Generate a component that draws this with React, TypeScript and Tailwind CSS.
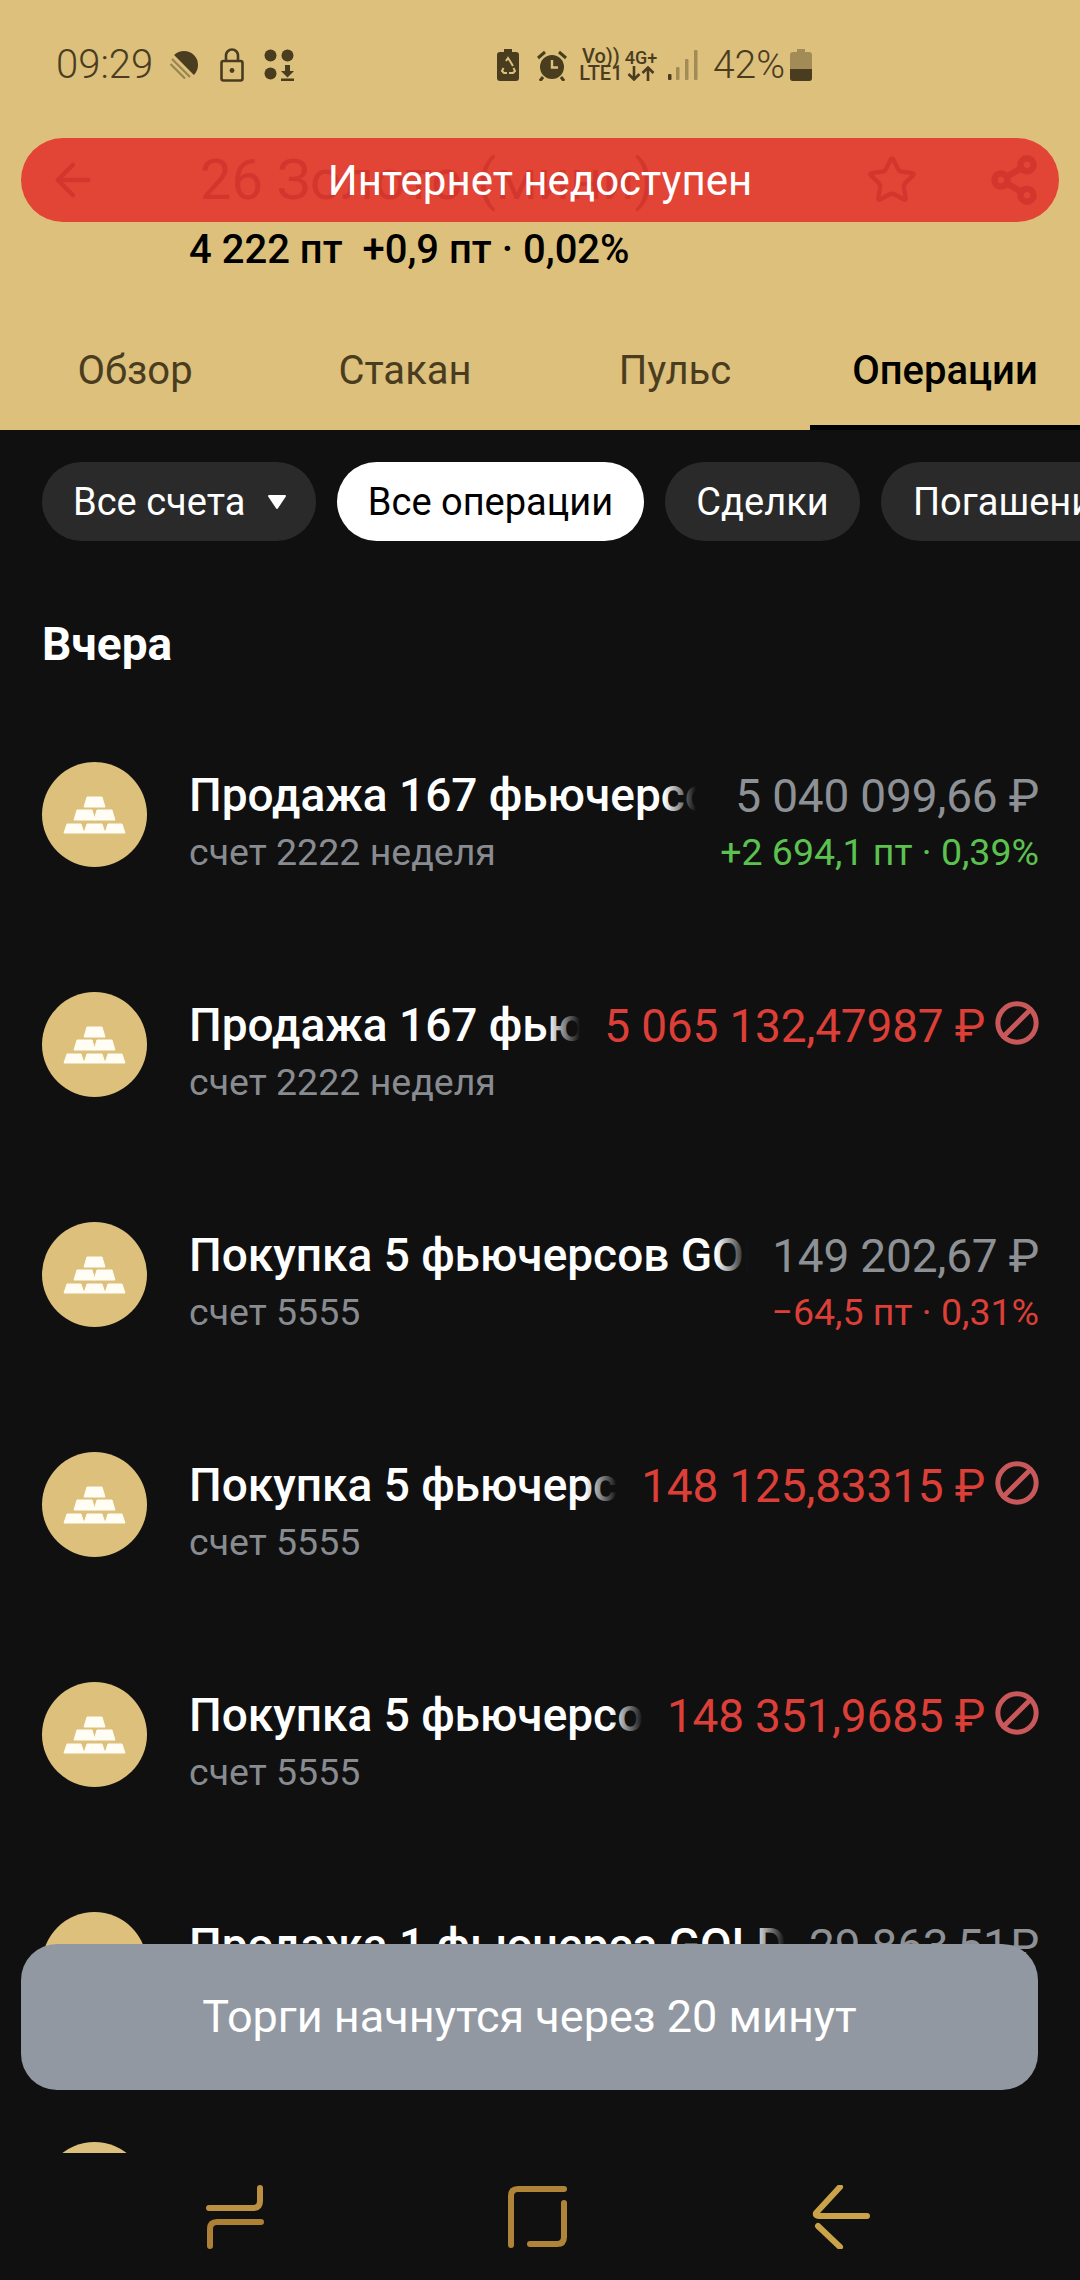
import { ArrowLeft, Ban, Share2, Star } from 'lucide-react'

const rows = [
  { title: 'Продажа 167 фьючерсов GOLD', sub: 'счет 2222 неделя', amount: '5 040 099,66 ₽', result: '+2 694,1 пт · 0,39%', tone: 'up' },
  { title: 'Продажа 167 фьючерсов GOLD', sub: 'счет 2222 неделя', amount: '5 065 132,47987 ₽', tone: 'failed' },
  { title: 'Покупка 5 фьючерсов GOLD', sub: 'счет 5555', amount: '149 202,67 ₽', result: '−64,5 пт · 0,31%', tone: 'down' },
  { title: 'Покупка 5 фьючерсов GOLD', sub: 'счет 5555', amount: '148 125,83315 ₽', tone: 'failed' },
  { title: 'Покупка 5 фьючерсов GOLD', sub: 'счет 5555', amount: '148 351,9685 ₽', tone: 'failed' },
  { title: 'Продажа 1 фьючерса GOLD', sub: 'счет 5555', amount: '29 863,51₽', tone: 'up' },
]

function GoldBars() {
  return (
    <svg width="63" height="38" viewBox="0 0 63 38" fill="#fffdf4" stroke="#fffdf4" strokeWidth="1" strokeLinejoin="round">
      <path d="M24 1h15l3 10H21z" />
      <path d="M14 14h15l3 10H11z" />
      <path d="M34 14h15l3 10H31z" />
      <path d="M4 28h14l3 9H1z" />
      <path d="M24 28h15l3 9H21z" />
      <path d="M45 28h14l3 9H42z" />
    </svg>
  )
}

function StatusLeftIcons() {
  return (
    <div className="ml-[17px] flex items-center text-[#4a3d1f]">
      <svg width="28" height="28" viewBox="0 0 28 28">
        <path d="M4.100 4.100A14 14 0 0 1 23.900 23.900z" fill="currentColor" />
        <path d="M2 8l18 18M0.500 13l14.500 14.500" stroke="currentColor" strokeWidth="2.200" opacity="0.45" />
      </svg>
      <svg className="ml-[22px]" width="24" height="34" viewBox="0 0 24 34" fill="none" stroke="currentColor" strokeWidth="2.600">
        <rect x="1.500" y="13" width="21" height="19.500" rx="2" />
        <path d="M6 13V7.500a6 6 0 0 1 12 0V13" />
        <circle cx="12" cy="22.500" r="2.400" fill="currentColor" stroke="none" />
      </svg>
      <svg className="ml-[20px]" width="30" height="32" viewBox="0 0 30 32" fill="currentColor">
        <circle cx="6.500" cy="6.500" r="6" />
        <circle cx="23.500" cy="6.500" r="6" />
        <circle cx="6.500" cy="24.500" r="6" />
        <path d="M21 16h5v6h4l-6.500 6.500L17 22h4zM17 29.500h13V32H17z" />
      </svg>
    </div>
  )
}

function StatusRightIcons() {
  return (
    <div className="flex items-center text-[#4a3d1f]">
      <svg width="22" height="32" viewBox="0 0 22 32">
        <path d="M7 0h8v3h4a3 3 0 0 1 3 3v23a3 3 0 0 1-3 3H3a3 3 0 0 1-3-3V6a3 3 0 0 1 3-3h4z" fill="currentColor" />
        <path d="M9 12l2-3 2 3 3 5M6.500 19l-1.500 3 2 2h3M12 24h4l2-2-1.500-3" stroke="#dcc07c" strokeWidth="2" fill="none" />
      </svg>
      <svg className="ml-[18px]" width="30" height="31" viewBox="0 0 30 31">
        <circle cx="15" cy="17" r="12" fill="currentColor" />
        <path d="M15 10v7.500h6" stroke="#dcc07c" strokeWidth="2.400" fill="none" />
        <path d="M1 8l7-6M29 8l-7-6M6 27l-3 4M24 27l3 4" stroke="currentColor" strokeWidth="3" />
      </svg>
      <div className="ml-[14px] flex w-[40px] flex-col items-center text-[20px] font-medium leading-[17px]">
        <span>Vo))</span>
        <span>LTE1</span>
      </div>
      <div className="ml-[4px] flex w-[32px] flex-col items-center text-[18px] font-medium leading-[17px]">
        <span>4G+</span>
        <svg width="28" height="15" viewBox="0 0 28 15" fill="none" stroke="currentColor" strokeWidth="2.600">
          <path d="M7 0v13M1.500 8L7 13.500 12.500 8" />
          <path d="M21 15V2M15.500 7L21 1.500 26.500 7" />
        </svg>
      </div>
      <svg className="ml-[11px]" width="30" height="30" viewBox="0 0 30 30" fill="currentColor">
        <rect x="0" y="24" width="3.500" height="6" rx="1" />
        <rect x="8" y="17" width="3.500" height="13" rx="1" opacity="0.4" />
        <rect x="17" y="9" width="3.500" height="21" rx="1" opacity="0.4" />
        <rect x="26" y="0" width="3.500" height="30" rx="1" opacity="0.4" />
      </svg>
      <span className="ml-[15px] text-[39px] font-light leading-none">42%</span>
      <svg className="ml-[5px]" width="22" height="32" viewBox="0 0 22 32" fill="currentColor">
        <path d="M7 0h8v3h4a3 3 0 0 1 3 3v23a3 3 0 0 1-3 3H3a3 3 0 0 1-3-3V6a3 3 0 0 1 3-3h4z" opacity="0.4" />
        <path d="M0 20h22v9a3 3 0 0 1-3 3H3a3 3 0 0 1-3-3z" />
      </svg>
    </div>
  )
}

function OperationRow({ title, sub, amount, result, tone }: (typeof rows)[number]) {
  const amountColor = tone === 'failed' ? 'text-[#dc3f37]' : 'text-[#8d9095]'
  return (
    <div className="flex h-[230px] shrink-0 pl-[42px] pr-[41px] pt-[63px]">
      <div className="flex h-[105px] w-[105px] shrink-0 items-center justify-center rounded-full bg-[#dcc07c]">
        <GoldBars />
      </div>
      <div className="ml-[42px] mt-[5px] min-w-0 flex-1">
        <div className="relative h-[57px] overflow-hidden whitespace-nowrap text-[46px] font-medium leading-[56px] text-white">
          {title}
          <div className="absolute inset-y-0 right-0 w-[32px] bg-gradient-to-r from-transparent to-[#101010]" />
        </div>
        <div className="h-[56px] text-[37.5px] leading-[56px] text-[#888b90]">{sub}</div>
      </div>
      <div className="ml-[24px] mt-[5px] flex shrink-0 flex-col items-end">
        <div className="flex h-[57px] items-center">
          <span className={`whitespace-nowrap text-[46px] leading-[56px] tracking-[-0.2px] ${amountColor}`}>{amount}</span>
          {tone === 'failed' && <Ban className="-mr-[1px] ml-[9px] h-[46px] w-[46px] -translate-y-[3px] -scale-x-100 text-[#c9585a]" strokeWidth={2.600} />}
        </div>
        {result && (
          <div className={`h-[56px] whitespace-nowrap text-[37.5px] leading-[56px] ${tone === 'up' ? 'text-[#5cc24f]' : 'text-[#dc3f37]'}`}>
            {result}
          </div>
        )}
      </div>
    </div>
  )
}

export default function App() {
  return (
    <div className="relative flex h-[2280px] w-[1080px] flex-col overflow-hidden bg-[#101010] [font-family:Roboto,sans-serif]">
      <header className="bg-[#dcc07c]">
        <div className="flex h-[130px] items-center pl-[56px] pr-[268px] text-[#4a3d1f]">
          <span className="text-[40px] font-light leading-none">09:29</span>
          <StatusLeftIcons />
          <div className="flex-1" />
          <StatusRightIcons />
        </div>

        <div className="flex h-[100px] items-center pl-[47px] pr-[40px] text-black">
          <ArrowLeft className="h-[52px] w-[52px]" strokeWidth={2} />
          <span className="ml-[101px] text-[56px] leading-none">26 Золото (мини)</span>
          <div className="flex-1" />
          <Star className="h-[52px] w-[52px]" strokeWidth={2} />
          <Share2 className="ml-[70px] h-[52px] w-[52px]" strokeWidth={3} />
        </div>

        <div className="h-[40px] pl-[189px] text-[40px] font-medium leading-[40px] text-black">
          4 222 пт&nbsp;&nbsp;+0,9 пт · 0,02%
        </div>

        <nav className="mt-[50px] grid h-[110px] grid-cols-4 text-[40px] text-[#4a3d1f]">
          <div className="flex items-center justify-center pb-[8px]">Обзор</div>
          <div className="flex items-center justify-center pb-[8px]">Стакан</div>
          <div className="flex items-center justify-center pb-[8px]">Пульс</div>
          <div className="flex items-center justify-center border-b-[5px] border-black pb-[3px] font-medium text-black">Операции</div>
        </nav>
      </header>

      <div className="mt-[32px] flex gap-[21px] whitespace-nowrap pl-[42px] text-[38px] leading-none">
        <div className="flex h-[79px] w-[274px] shrink-0 items-center rounded-full bg-[#2a2a2a] pl-[31px] text-white">
          Все счета
          <svg className="ml-[22px]" width="20" height="16" viewBox="0 0 20 16" fill="white" stroke="white" strokeWidth="2" strokeLinejoin="round">
            <path d="M2 2h16l-8 12z" />
          </svg>
        </div>
        <div className="flex h-[79px] w-[307px] shrink-0 items-center justify-center rounded-full bg-white text-black">Все операции</div>
        <div className="flex h-[79px] w-[195px] shrink-0 items-center justify-center rounded-full bg-[#2a2a2a] text-white">Сделки</div>
        <div className="flex h-[79px] shrink-0 items-center rounded-full bg-[#2a2a2a] px-[32px] text-white">Погашения</div>
      </div>

      <h2 className="ml-[42px] mt-[75px] h-[56px] text-[46px] font-bold leading-[56px] text-white">Вчера</h2>

      <div className="mt-[27px] flex min-h-0 flex-1 flex-col overflow-hidden">
        {rows.map((row, i) => (
          <OperationRow key={i} {...row} />
        ))}
        <div className="flex h-[230px] shrink-0 pl-[42px] pt-[63px]">
          <div className="h-[105px] w-[105px] rounded-full bg-[#dcc07c]" />
        </div>
      </div>

      <div className="flex h-[127px] shrink-0 items-center justify-between pl-[205px] pr-[210px]">
        <svg width="60" height="64" viewBox="0 0 60 64" fill="none" strokeWidth="6" strokeLinecap="round">
          <path d="M4 23H48q7 0 7-7V3" stroke="#bb9040" />
          <path d="M56 37H12q-7 0-7 7V61" stroke="#ad8036" />
        </svg>
        <svg width="60" height="64" viewBox="0 0 60 64" fill="none" strokeWidth="6" strokeLinecap="round">
          <path d="M56 4H10q-7 0-7 7V60" stroke="#b08438" />
          <path d="M56 18V52q0 7-7 7H22" stroke="#b08438" />
        </svg>
        <svg width="60" height="64" viewBox="0 0 60 64" fill="none" strokeWidth="6" strokeLinecap="round">
          <path d="M30 2L6 28q-1 3 3 3H57" stroke="#c9a24a" />
          <path d="M8 41L30 62" stroke="#c9a24a" />
        </svg>
      </div>

      <div className="absolute left-[21px] top-[138px] flex h-[84px] w-[1038px] items-center justify-center rounded-full bg-[#e23a30]/[0.93] text-[42px] text-white">
        Интернет недоступен
      </div>

      <div className="absolute left-[21px] top-[1944px] flex h-[146px] w-[1017px] items-center justify-center rounded-[36px] bg-[#9198a1] text-[45px] text-white">
        Торги начнутся через 20 минут
      </div>
    </div>
  )
}
